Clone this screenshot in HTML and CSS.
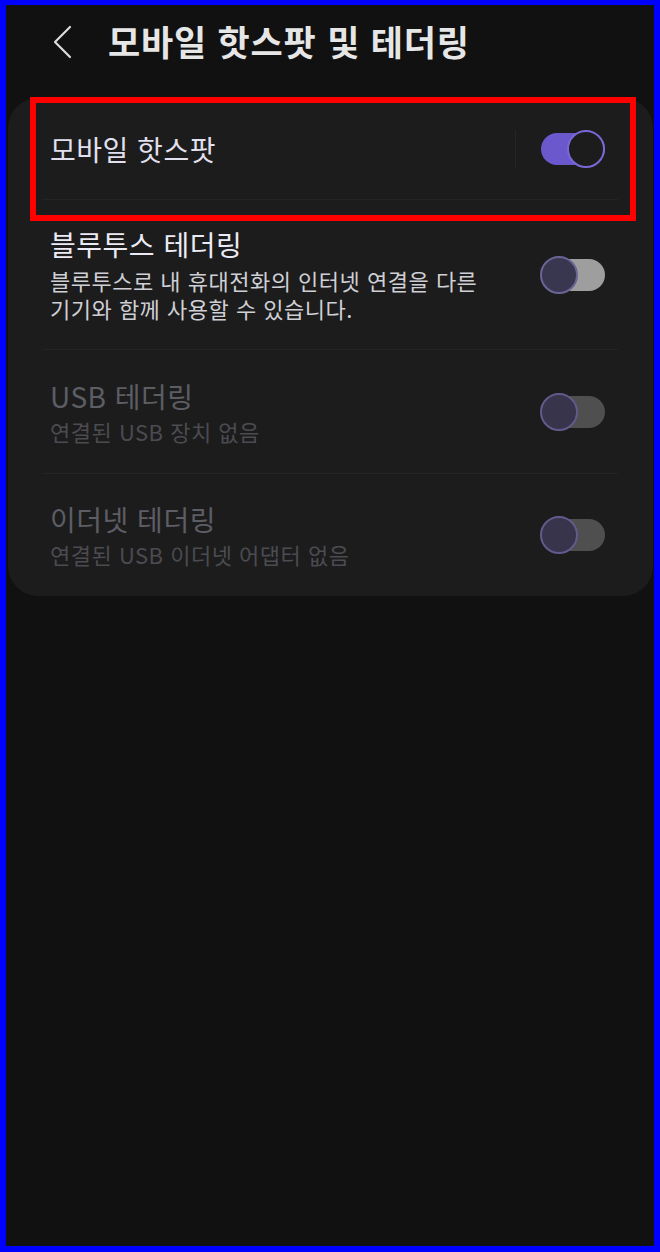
FILE: index.html
```html
<!DOCTYPE html>
<html lang="ko">
<head>
  <meta charset="UTF-8">
  <meta name="viewport" content="width=device-width, initial-scale=1.0">
  <title>모바일 핫스팟 및 테더링</title>
  <link rel="stylesheet" href="styles.css">
</head>
<body>
  <div class="frame">
    <header class="header">
      <button class="back" aria-label="뒤로">
        <svg width="20" height="34" viewBox="0 0 20 34">
          <path d="M18 2 L3 17 L18 32" fill="none" stroke="#dcdcdc" stroke-width="2.2" stroke-linecap="round" stroke-linejoin="round"/>
        </svg>
      </button>
      <h1 class="title">모바일 핫스팟 및 테더링</h1>
    </header>

    <div class="card">
      <div class="row row-main">
        <div class="text">
          <div class="label label-main">모바일 핫스팟</div>
        </div>
        <span class="vline"></span>
        <span class="switch on"><span class="track"></span><span class="thumb"></span></span>
      </div>

      <div class="row">
        <div class="text">
          <div class="label">블루투스 테더링</div>
          <div class="desc wrap">블루투스로 내 휴대전화의 인터넷 연결을 다른 기기와 함께 사용할 수 있습니다.</div>
        </div>
        <span class="switch"><span class="track"></span><span class="thumb"></span></span>
      </div>

      <div class="row disabled">
        <div class="text">
          <div class="label">USB 테더링</div>
          <div class="desc">연결된 USB 장치 없음</div>
        </div>
        <span class="switch"><span class="track"></span><span class="thumb"></span></span>
      </div>

      <div class="row disabled">
        <div class="text">
          <div class="label">이더넷 테더링</div>
          <div class="desc">연결된 USB 이더넷 어댑터 없음</div>
        </div>
        <span class="switch"><span class="track"></span><span class="thumb"></span></span>
      </div>
    </div>

    <div class="highlight"></div>
  </div>
</body>
</html>
```

FILE: styles.css
```css
* {
  box-sizing: border-box;
}
body {
  margin: 0;
  background: #0000ff;
  font-family: "Noto Sans CJK KR", "Noto Sans", sans-serif;
}
.frame {
  position: relative;
  width: 660px;
  height: 1252px;
  border-style: solid;
  border-color: #0000ff;
  border-width: 5px 6px 6px 6px;
  background: #111111;
  overflow: hidden;
}
.header {
  display: flex;
  align-items: center;
  height: 76px;
  padding-left: 46px;
}
.back {
  display: flex;
  align-items: center;
  padding: 0;
  border: none;
  background: none;
  width: 20px;
  height: 34px;
  margin-top: -2px;
}
.title {
  margin: -4px 0 0 36px;
  font-size: 35px;
  font-weight: 700;
  color: #e6e6e6;
  letter-spacing: 0.8px;
  line-height: 40px;
}
.card {
  margin: 17px 1px 0 2px;
  background: #1c1c1c;
  border-radius: 30px;
  padding: 0 35px 0 34px;
}
.row {
  display: flex;
  align-items: center;
  padding: 27px 13px 27px 8px;
  border-bottom: 1px solid #242424;
}
.row.disabled {
  padding-top: 29px;
  padding-bottom: 28px;
}
.row:last-child {
  border-bottom: none;
  padding-top: 28px;
  padding-bottom: 28px;
}
.row-main {
  height: 102px;
  padding-top: 0;
  padding-bottom: 0;
}
.text {
  flex: 1;
}
.label {
  font-size: 28px;
  line-height: 34px;
  letter-spacing: 0.5px;
  color: #ecebf5;
}
.label-main {
  color: #e2e0ef;
}
.desc {
  margin-top: 5px;
  font-size: 22px;
  line-height: 28px;
  letter-spacing: 0.5px;
  color: #cfcfd6;
}
.desc.wrap {
  max-width: 445px;
}
.disabled .label {
  color: #5d5d64;
}
.disabled .desc {
  color: #4b4b51;
  margin-top: 4px;
}
.vline {
  width: 1px;
  height: 38px;
  background: #262626;
  margin-right: 24px;
}
.switch {
  position: relative;
  width: 65px;
  height: 38px;
  flex: none;
}
.track {
  position: absolute;
  top: 3px;
  left: 1px;
  right: 0;
  height: 32px;
  border-radius: 16px;
  background: #9e9e9e;
}
.thumb {
  position: absolute;
  top: 0;
  left: 0;
  width: 38px;
  height: 38px;
  border-radius: 50%;
  background: #393650;
  border: 2px solid #6b6496;
}
.disabled .track {
  background: #4f4f4f;
}
.disabled .thumb {
  background: #37344c;
  border-color: #615b8c;
}
.switch.on .track {
  background: #6a58cc;
}
.switch.on .thumb {
  left: auto;
  right: 0;
  background: #1c1c1c;
  border-color: #7a68d8;
}
.highlight {
  position: absolute;
  left: 24px;
  top: 92px;
  width: 606px;
  height: 124px;
  border: 6px solid #ff0000;
}
```
